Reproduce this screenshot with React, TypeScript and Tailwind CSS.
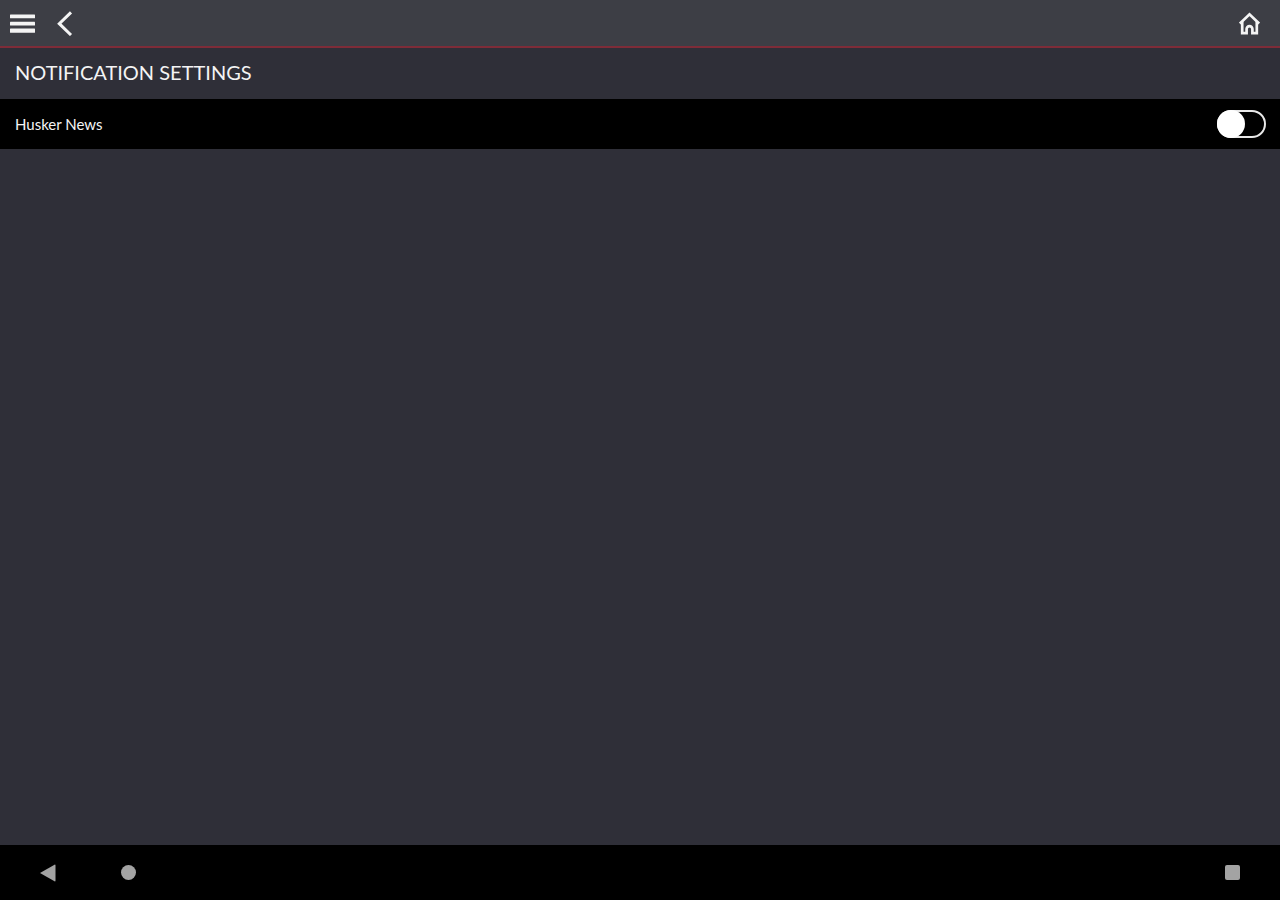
import { useState } from "react";

interface ToggleRowProps {
  id: string;
  label: string;
}

function ToggleRow({ id, label }: ToggleRowProps) {
  const [enabled, setEnabled] = useState<boolean>(false);

  return (
    <div className="flex items-center justify-between h-[50px] pl-[15px] pr-[14px] bg-black">
      <label htmlFor={id} className="text-[15px] leading-6 text-[#f4f4f4]">
        {label}
      </label>
      <input
        id={id}
        type="checkbox"
        role="switch"
        checked={enabled}
        onChange={(event) => setEnabled(event.target.checked)}
        className="flex flex-none items-center appearance-none w-[49px] h-7 rounded-full border-2 border-[#e8e8e8] cursor-pointer before:block before:flex-none before:size-7 before:-ml-0.5 before:rounded-full before:bg-white checked:justify-end checked:before:ml-0 checked:before:-mr-0.5"
      />
    </div>
  );
}

function TopBar() {
  return (
    <header className="flex items-center justify-between h-12 pl-2.5 pr-5 bg-[#3d3e45] border-b-2 border-[#7e2c38] text-[#f4f4f4]">
      <div className="flex items-center gap-[21px]">
        <button type="button" aria-label="Menu" className="cursor-pointer">
          <svg width="25" height="20" viewBox="0 0 25 20" fill="currentColor">
            <rect x="0" y="1.6" width="25" height="3.6" rx="0.5" />
            <rect x="0" y="8.8" width="25" height="3.8" rx="0.5" />
            <rect x="0" y="15.4" width="25" height="4.4" rx="0.5" />
          </svg>
        </button>
        <button type="button" aria-label="Back" className="cursor-pointer">
          <svg width="18" height="26" viewBox="0 0 18 26" fill="none" stroke="currentColor" strokeWidth="3">
            <path d="M15 2.4 L3.3 13.7 L15 25" />
          </svg>
        </button>
      </div>
      <button type="button" aria-label="Home" className="cursor-pointer">
        <svg width="21" height="24" viewBox="0 0 21 24" fill="none" stroke="currentColor" strokeWidth="2.7">
          <path d="M0.9 12.6 L10.5 3.4 L20.1 12.6" />
          <path d="M3.2 10.4 V22.2 H7.6 V18 a2.9 2.9 0 0 1 5.8 0 V22.2 H17.8 V10.4" />
        </svg>
      </button>
    </header>
  );
}

function SystemBar() {
  return (
    <nav className="flex items-center justify-between h-[55px] pl-10 pr-10 bg-black text-[#a3a3a3]">
      <div className="flex items-center gap-[65px]">
        <button type="button" aria-label="System back" className="cursor-pointer">
          <svg width="16" height="18" viewBox="0 0 16 18" fill="currentColor">
            <path d="M0 9 L14.5 0.7 Q15.5 0.3 15.5 1.5 V16.5 Q15.5 17.7 14.5 17.3 Z" />
          </svg>
        </button>
        <button type="button" aria-label="System home" className="size-[15px] rounded-full bg-current cursor-pointer" />
      </div>
      <button type="button" aria-label="Recent apps" className="size-[15px] rounded-xs bg-current cursor-pointer" />
    </nav>
  );
}

export default function App() {
  return (
    <div className="flex flex-col min-h-screen bg-[#2f2f38] font-['Lato',sans-serif]">
      <TopBar />
      <main className="flex flex-col grow">
        <h1 className="px-[15px] pt-2.5 pb-[13px] text-xl leading-7 text-[#f4f4f4]">NOTIFICATION SETTINGS</h1>
        <ToggleRow id="husker-news" label="Husker News" />
      </main>
      <SystemBar />
    </div>
  );
}
